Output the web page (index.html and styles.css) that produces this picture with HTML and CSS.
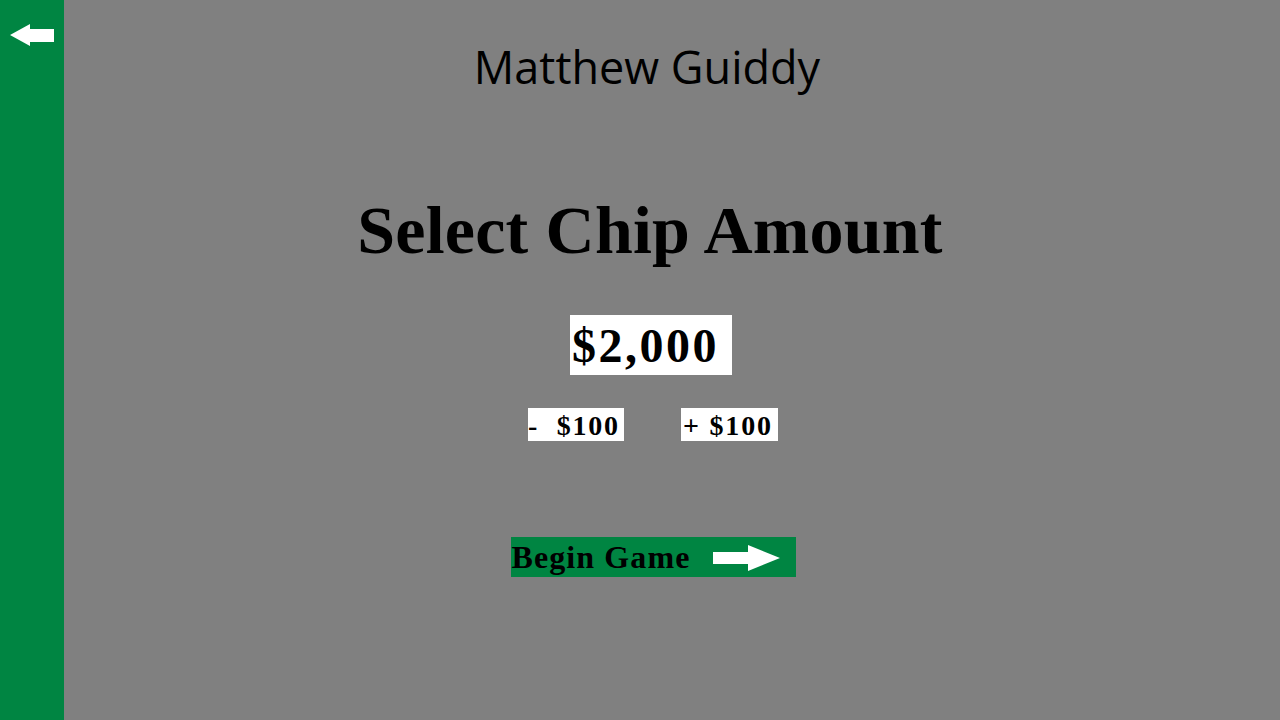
FILE: index.html
```html
<!DOCTYPE html>
<html>
<head>
<meta charset="utf-8">
<link rel="stylesheet" href="styles.css">
</head>
<body>
<div class="app">
  <aside class="sidebar">
    <svg class="back" width="64" height="70" viewBox="0 0 64 70">
      <polygon points="10,35 30,24 30,29 54,29 54,42 30,42 30,46" fill="#fff"/>
    </svg>
  </aside>
  <main class="main">
    <div class="player">Matthew Guiddy</div>
    <h1 class="heading">Select Chip Amount</h1>
    <div class="amount">$2,000</div>
    <div class="steps">
      <div class="step minus">-&nbsp; $100</div>
      <div class="step plus">+ $100</div>
    </div>
    <div class="begin">
      <span class="begin-text">Begin Game</span>
      <svg class="begin-arrow" width="68" height="27" viewBox="0 0 68 27">
        <polygon points="0,7 35,7 35,0 67,13 35,26 35,19 0,19" fill="#fff"/>
      </svg>
    </div>
  </main>
</div>
</body>
</html>
```
FILE: styles.css
```css
html, body {
  margin: 0;
  padding: 0;
  width: 1280px;
  height: 720px;
  overflow: hidden;
  background: #808080;
}
.app {
  display: flex;
  width: 1280px;
  height: 720px;
}
.sidebar {
  width: 64px;
  flex: 0 0 64px;
  background: #008542;
}
.back {
  display: block;
}
.main {
  flex: 1;
  display: flex;
  flex-direction: column;
  align-items: center;
  padding-right: 40px;
}
.player {
  font-family: "Open Sans", "Noto Sans", sans-serif;
  font-size: 45px;
  line-height: 60px;
  color: #000;
  margin-top: 37px;
  letter-spacing: 0px;
  margin-left: -10px;
}
.heading {
  font-family: "Liberation Serif", serif;
  font-weight: bold;
  font-size: 68px;
  line-height: 80px;
  margin: 93px 0 0 -4px;
  color: #000;
  letter-spacing: 0.2px;
}
.amount {
  margin-top: 45px;
  margin-left: -2px;
  background: #fff;
  font-family: "Liberation Serif", serif;
  font-weight: bold;
  font-size: 48px;
  line-height: 62px;
  height: 60px;
  width: 162px;
  box-sizing: border-box;
  padding-left: 2px;
  letter-spacing: 2.5px;
  color: #000;
  white-space: nowrap;
}
.steps {
  display: flex;
  gap: 57px;
  margin-top: 33px;
  margin-left: 2px;
}
.step {
  background: #fff;
  font-family: "Liberation Serif", serif;
  font-weight: bold;
  font-size: 28px;
  line-height: 35px;
  height: 33px;
  box-sizing: border-box;
  width: 96px;
  letter-spacing: 1.8px;
  color: #000;
  white-space: nowrap;
}
.plus {
  width: 97px;
  padding-left: 2px;
}
.begin {
  margin-top: 96px;
  margin-left: 2px;
  background: #008542;
  width: 285px;
  height: 40px;
  display: flex;
  align-items: center;
  box-sizing: border-box;
  padding-left: 1px;
}
.begin-text {
  font-family: "Liberation Serif", serif;
  font-weight: bold;
  font-size: 32px;
  color: #000;
  line-height: 40px;
  letter-spacing: 1.1px;
  white-space: nowrap;
}
.begin-arrow {
  display: block;
  margin-left: 23px;
  margin-top: 2px;
}
```
